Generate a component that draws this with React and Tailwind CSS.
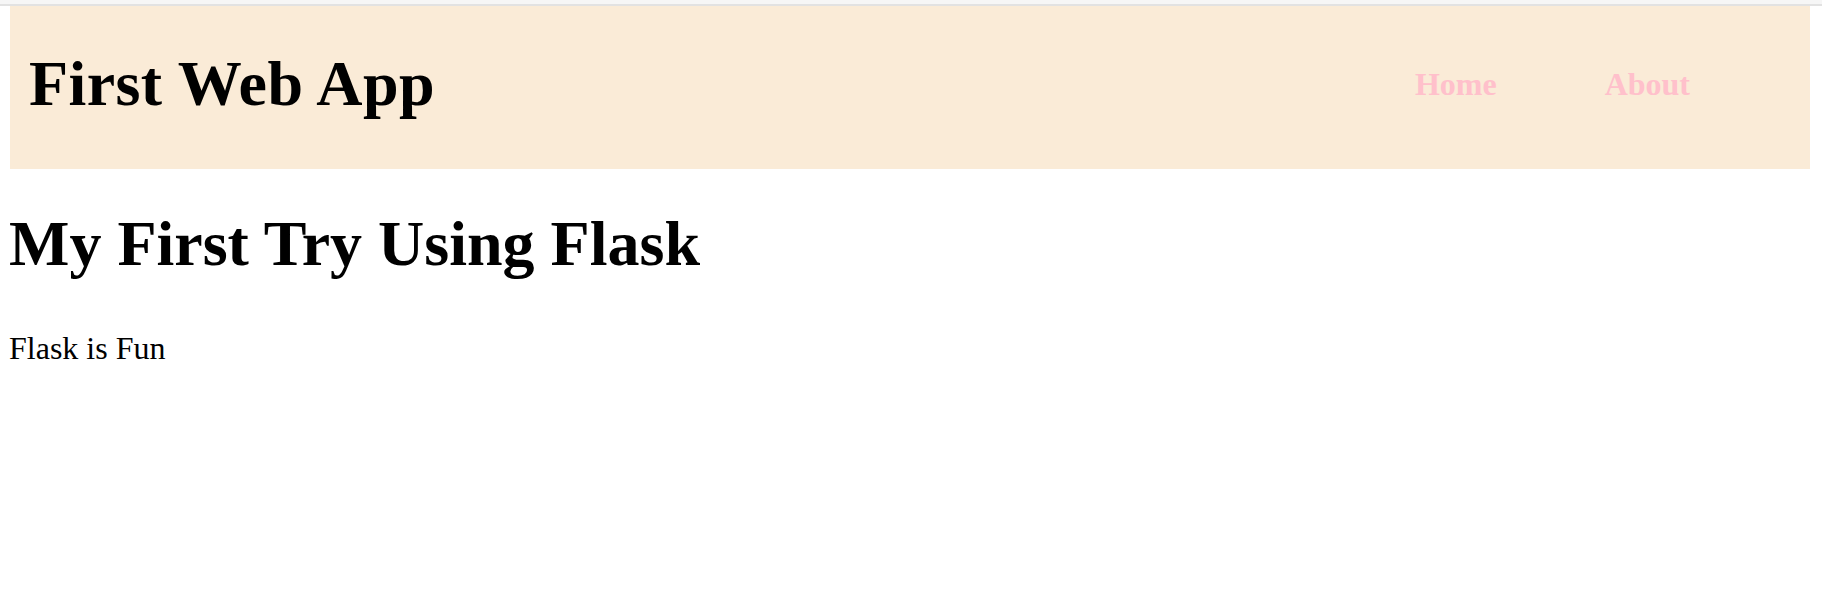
import React from 'react';

const serif = { fontFamily: '"Liberation Serif", "Times New Roman", serif' };

export default function App() {
    return (
        <div className="min-h-[612px] w-full bg-white text-black" style={serif}>
            <div className="h-[4px] bg-[#f6f6f6]" />
            <div className="h-[2px] bg-[#e2e2e2]" />

            <header className="ml-[10px] mr-[12px] h-[163px] pb-[7px] pl-[19px] pr-[120px] bg-[#faebd7] flex items-center">
                <h1 className="text-[64px] leading-[73.6px] font-bold tracking-[0.4px]">First Web App</h1>
                <nav className="ml-auto flex items-center gap-[108px]">
                    <a className="text-[32px] leading-[36.8px] font-bold text-[#ffc0cb]">Home</a>
                    <a className="text-[32px] leading-[36.8px] font-bold text-[#ffc0cb]">About</a>
                </nav>
            </header>

            <main className="px-[9px]">
                <h1 className="mt-[38px] text-[64px] leading-[73.6px] font-bold">My First Try Using Flask</h1>
                <p className="mt-[49px] text-[32px] leading-[36.8px]">Flask is Fun</p>
            </main>
        </div>
    );
}
